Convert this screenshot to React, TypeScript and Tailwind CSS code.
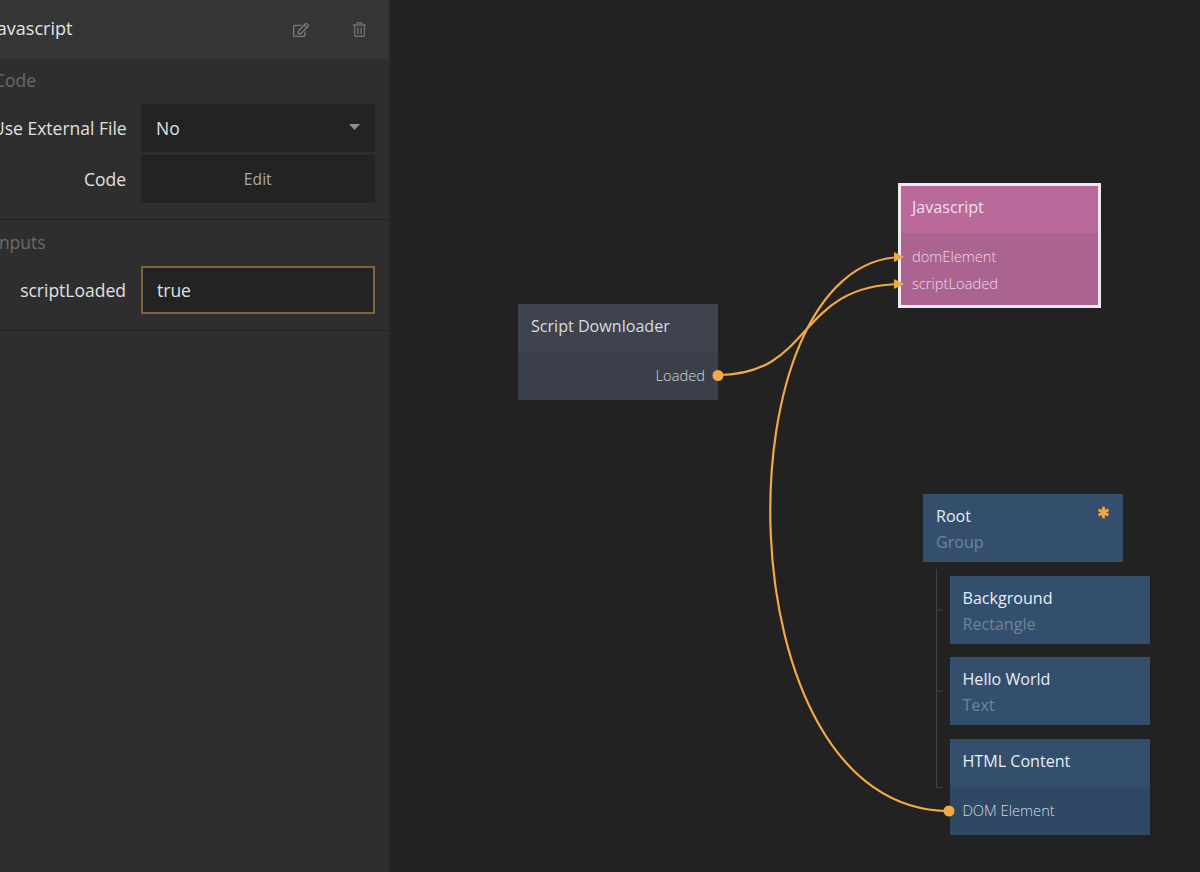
import { FaRegEdit, FaRegTrashAlt } from 'react-icons/fa';

interface NodeProps {
  x: number;
  y: number;
  w: number;
  title: string;
  sub?: string;
  port?: string;
  portRight?: boolean;
  className: string;
  portClassName: string;
  titleClassName: string;
  subClassName?: string;
}

const GraphNode = ({ x, y, w, title, sub, port, portRight, className, portClassName, titleClassName, subClassName }: NodeProps) => (
  <div className={`absolute ${className}`} style={{ left: x, top: y, width: w }}>
    {sub ? (
      <div className="h-[68px] pl-[13px] pt-[9px]">
        <div className={`text-[16.100px] leading-[26px] ${titleClassName}`}>{title}</div>
        <div className={`text-[16.100px] leading-[26px] ${subClassName}`}>{sub}</div>
      </div>
    ) : (
      <div className="h-[48px] pl-[13px] pb-[4px] flex items-center">
        <div className={`text-[16.100px] ${titleClassName}`}>{title}</div>
      </div>
    )}
    {port && (
      <div className={`h-[48px] px-[13px] pb-[1px] flex items-center text-[14.700px] font-light ${portClassName} ${portRight ? 'justify-end' : ''}`}>
        {port}
      </div>
    )}
  </div>
);

export default function App() {
  return (
    <div className="flex w-[1200px] h-[872px] overflow-hidden bg-[#222222] font-['Open_Sans',sans-serif]">
      <aside className="w-[391px] h-full shrink-0 bg-[#2e2e2e] border-r-2 border-[#262626] overflow-hidden">
        <div className="h-[59px] bg-[#353535] flex items-center ml-[-8px] pr-[22px]">
          <span className="text-[18px] text-[#e4e4e4] flex-1 pb-[2px]">Javascript</span>
          <FaRegEdit className="text-[#7a7a7a] text-[16px] mr-[43px]" />
          <FaRegTrashAlt className="text-[#6e6e6e] text-[15px]" />
        </div>

        <section className="h-[161px] border-b border-[#222222] ml-[-8px] pr-[14.500px]">
          <div className="h-[43px] mb-[2px] ml-[2px] flex items-center text-[17.500px] text-[#6a6a6a]">Code</div>
          <div className="flex items-center gap-[15px] h-[48px]">
            <label className="w-[134px] text-right text-[17.500px] text-[#e0e0e0] whitespace-nowrap">Use External File</label>
            <div className="flex-1 h-full bg-[#232323] flex items-center justify-between pl-[15px] pr-[15px]">
              <span className="text-[17.500px] text-[#e0e0e0]">No</span>
              <svg width="11" height="6" viewBox="0 0 11 6" className="mt-[-3px]">
                <path d="M0 0h11L5.500 6z" fill="#8f8f8f" />
              </svg>
            </div>
          </div>
          <div className="flex items-center gap-[15px] h-[48px] mt-[3px]">
            <label className="w-[134px] text-right text-[17.500px] text-[#e0e0e0]">Code</label>
            <div className="flex-1 h-full bg-[#232323] flex items-center justify-center pt-[1px] text-[15.700px] text-[#a8a8a8]">Edit</div>
          </div>
        </section>

        <section className="h-[111px] border-b border-[#222222] ml-[-8px] pr-[14.500px]">
          <div className="h-[44px] mb-[2px] ml-[2px] flex items-center text-[17.500px] text-[#6a6a6a]">Inputs</div>
          <div className="flex items-center gap-[15px] h-[48px]">
            <label className="w-[134px] text-right text-[17.500px] text-[#e0e0e0]">scriptLoaded</label>
            <div className="flex-1 h-full bg-[#232323] border-2 border-[#80633a] flex items-center pl-[14px] text-[17.500px] text-[#e0e0e0]">true</div>
          </div>
        </section>
      </aside>

      <main className="relative flex-1">
        <GraphNode
          x={127} y={304} w={200}
          title="Script Downloader" port="Loaded" portRight
          className="bg-[#3f434e]" portClassName="bg-[#3b3f4a] text-[#d5d7dc]" titleClassName="text-[#d9dbe0]"
        />
        <div className="absolute left-[507px] top-[183px] w-[203px] h-[125px] flex flex-col border-[3px] border-[#efeaee]">
          <div className="h-[47px] bg-[#b96a9b] pl-[11px] pb-[5px] flex items-center text-[16.100px] text-[#f3dfeb]">Javascript</div>
          <div className="flex-1 bg-[#ab6490] pl-[11px] pt-[10px] text-[14.700px] font-light leading-[27px] text-[#f0d8e6]">
            <div>domElement</div>
            <div>scriptLoaded</div>
          </div>
        </div>

        <GraphNode
          x={532} y={494} w={200}
          title="Root" sub="Group"
          className="bg-[#344f6d]" portClassName="" titleClassName="text-[#e6edf4]" subClassName="text-[#6f8499]"
        />
        <svg className="absolute left-[705.500px] top-[505.500px]" width="13" height="13" viewBox="0 0 12 12">
          <path d="M6 .8v10.400M1.500 3.400l9 5.200M10.500 3.400l-9 5.200" stroke="#f5a83f" strokeWidth="2.600" />
        </svg>
        <GraphNode
          x={558.500} y={575.500} w={200.500}
          title="Background" sub="Rectangle"
          className="bg-[#344f6d]" portClassName="" titleClassName="text-[#e6edf4]" subClassName="text-[#6f8499]"
        />
        <GraphNode
          x={558.500} y={657} w={200.500}
          title="Hello World" sub="Text"
          className="bg-[#344f6d]" portClassName="" titleClassName="text-[#e6edf4]" subClassName="text-[#6f8499]"
        />
        <GraphNode
          x={558.500} y={739} w={200.500}
          title="HTML Content" port="DOM Element"
          className="bg-[#344f6d]" portClassName="bg-[#2f4864] text-[#cfd9e3]" titleClassName="text-[#e6edf4]"
        />

        {/* tree lines and wires, in page coordinates */}
        <svg className="absolute top-0 left-[-391px] pointer-events-none" width="1200" height="872" viewBox="0 0 1200 872" fill="none">
          <path d="M936.500 569V787.500H943M936.500 610H943M936.500 691H943" stroke="#424242" strokeWidth="1" />
          <path d="M718 375C815 375 795 284 903 284" stroke="#f2a845" strokeWidth="2.200" />
          <path d="M949 811C719 811 719 257 903 257" stroke="#f2a845" strokeWidth="2.200" />
          <path d="M894 252L904 257L894 262z" fill="#f2a845" />
          <path d="M894 279L904 284L894 289z" fill="#f2a845" />
          <circle cx="718" cy="375.500" r="5.500" fill="#f2a845" />
          <circle cx="949" cy="811" r="5.500" fill="#f2a845" />
        </svg>
      </main>
    </div>
  );
}
